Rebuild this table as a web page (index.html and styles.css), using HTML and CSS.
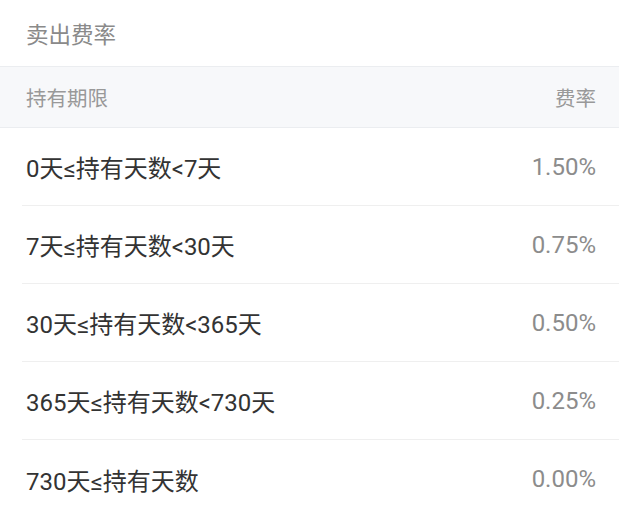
FILE: index.html
```html
<!DOCTYPE html>
<html lang="zh">
<head>
<meta charset="utf-8">
<link rel="stylesheet" href="styles.css">
</head>
<body>
<div class="page">
  <div class="title">卖出费率</div>
  <div class="head">
    <span>持有期限</span>
    <span>费率</span>
  </div>
  <div class="list">
    <div class="row"><span class="k">0天≤持有天数&lt;7天</span><span class="v">1.50%</span></div>
    <div class="row"><span class="k">7天≤持有天数&lt;30天</span><span class="v">0.75%</span></div>
    <div class="row"><span class="k">30天≤持有天数&lt;365天</span><span class="v">0.50%</span></div>
    <div class="row"><span class="k">365天≤持有天数&lt;730天</span><span class="v">0.25%</span></div>
    <div class="row"><span class="k">730天≤持有天数</span><span class="v">0.00%</span></div>
  </div>
</div>
</body>
</html>
```
FILE: styles.css
```css
* { box-sizing: border-box; }
body {
  margin: 0;
  background: #fff;
  font-family: Roboto, "Noto Sans CJK SC", sans-serif;
}
.page { width: 619px; }
.title {
  height: 66px;
  display: flex;
  align-items: center;
  padding-left: 26px;
  font-size: 22.5px;
  color: #8a8a8a;
}
.head {
  height: 62px;
  display: flex;
  justify-content: space-between;
  align-items: center;
  padding: 0 23px 0 26px;
  background: #f7f8fa;
  border-top: 1px solid #ebedf0;
  border-bottom: 1px solid #ebedf0;
  font-size: 20.5px;
  color: #999;
}
.list { padding-left: 22px; }
.row {
  height: 78px;
  display: flex;
  justify-content: space-between;
  align-items: center;
  padding: 0 23px 0 4px;
  border-bottom: 1px solid #efefef;
}
.row:last-child { border-bottom: none; }
.k { font-size: 24px; color: #333; }
.v { font-size: 24px; color: #8c8c8c; }
```
